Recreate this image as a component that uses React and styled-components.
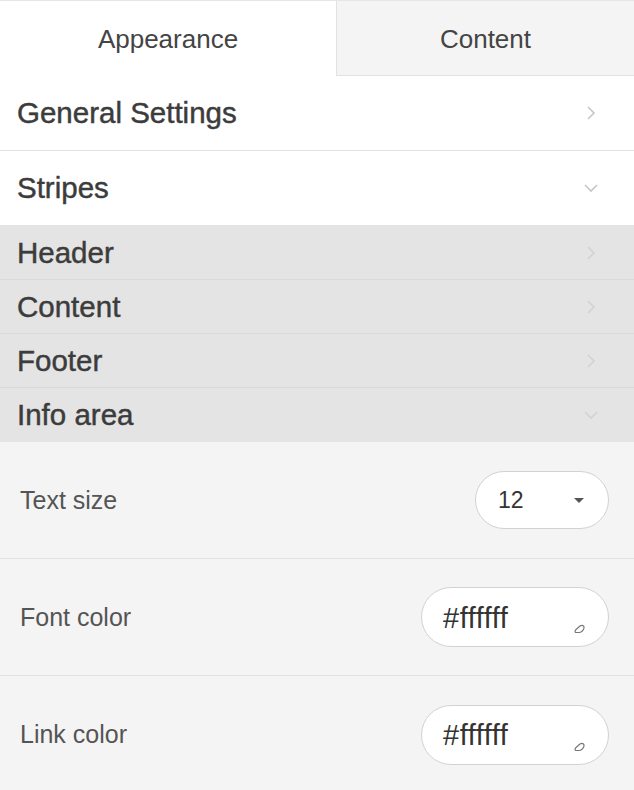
import React from "react";
import styled, { createGlobalStyle } from "styled-components";

const Global = createGlobalStyle`
  html, body { margin: 0; padding: 0; background: #f4f4f4; }
  body { font-family: "Liberation Sans", Arial, sans-serif; }
`;

const Panel = styled.div`
  width: 634px;
  min-height: 790px;
  background: #f4f4f4;
  border-top: 1px solid #e6e6e6;
  box-sizing: border-box;
`;

const Tabs = styled.div`
  display: grid;
  grid-template-columns: 336px 1fr;
  height: 75px;
  background: #fff;
`;

const Tab = styled.div`
  display: flex;
  align-items: center;
  justify-content: center;
  padding-top: 2px;
  font-size: 26px;
  color: #444;
  background: ${(p) => (p.active ? "#fff" : "#f4f4f4")};
  border-left: ${(p) => (p.active ? "none" : "1px solid #e2e2e2")};
  border-bottom: ${(p) => (p.active ? "none" : "1px solid #e2e2e2")};
`;

const Section = styled.div`
  display: flex;
  align-items: center;
  justify-content: space-between;
  height: ${(p) => (p.sub ? "54px" : "75px")};
  padding: 0 36px 0 17px;
  box-sizing: border-box;
  background: ${(p) => (p.sub ? "#e4e4e4" : "#fff")};
  border-bottom: 1px solid ${(p) => (p.sub ? "#dadada" : "#e2e2e2")};
  font-size: 29.5px;
  line-height: 1;
  color: #3c3c3c;
  -webkit-text-stroke: 0.45px #3c3c3c;
`;

const Sub = styled.div`
  ${Section}:last-child { border-bottom: none; }
`;

const FieldRow = styled.div`
  display: flex;
  align-items: center;
  justify-content: space-between;
  height: 117px;
  padding: 0 25px 0 20px;
  box-sizing: border-box;
  border-bottom: 1px solid #e2e2e2;
  font-size: 25px;
  color: #555;
  &:last-child { border-bottom: none; }
`;

const Select = styled.div`
  width: 134px;
  height: 58px;
  border: 1px solid #d2d2d2;
  border-radius: 29px;
  background: #fff;
  box-sizing: border-box;
  display: flex;
  align-items: center;
  justify-content: space-between;
  padding: 0 24px 0 22px;
  font-size: 23px;
  color: #333;
`;

const Caret = styled.span`
  width: 0;
  height: 0;
  border-left: 5px solid transparent;
  border-right: 5px solid transparent;
  border-top: 5px solid #555;
`;

const ColorInput = styled.div`
  position: relative;
  width: 188px;
  height: 60px;
  border: 1px solid #d2d2d2;
  border-radius: 30px;
  background: #fff;
  box-sizing: border-box;
  display: flex;
  align-items: center;
  padding: 2px 0 0 21px;
  font-size: 29px;
  letter-spacing: 0.5px;
  color: #333;
`;

const Grip = styled.svg`
  position: absolute;
  right: 22px;
  bottom: 12px;
`;

const Chevron = ({ down, faint }) => (
  <svg width="14" height="16" viewBox="0 0 14 16" fill="none">
    <path
      d={down ? "M1 5 L7 11 L13 5" : "M4 2 L10 8 L4 14"}
      stroke={faint ? "#d2d2d2" : "#c6c6c6"}
      strokeWidth="1.6"
    />
  </svg>
);

const subs = [
  { name: "Header" },
  { name: "Content" },
  { name: "Footer" },
  { name: "Info area", open: true },
];

const fields = [
  { label: "Font color", value: "#ffffff" },
  { label: "Link color", value: "#ffffff" },
];

export default function App() {
  return (
    <>
      <Global />
      <Panel>
        <Tabs>
          <Tab active>Appearance</Tab>
          <Tab>Content</Tab>
        </Tabs>
        <Section>
          General Settings
          <Chevron />
        </Section>
        <Section>
          Stripes
          <Chevron down />
        </Section>
        <Sub>
          {subs.map((s) => (
            <Section sub key={s.name}>
              {s.name}
              <Chevron down={s.open} faint />
            </Section>
          ))}
        </Sub>
        <div>
          <FieldRow>
            Text size
            <Select>
              12
              <Caret />
            </Select>
          </FieldRow>
          {fields.map((f) => (
            <FieldRow key={f.label}>
              {f.label}
              <ColorInput>
                {f.value}
                <Grip width="12" height="10" viewBox="0 0 12 10">
                  <path
                    d="M2 8.5 C0.8 8.5 0.8 6.5 2 5.5 L6 2 C8 0.8 10.5 1.5 10 4 C9.5 6.5 7 8.5 5 8.5 Z"
                    stroke="#777"
                    strokeWidth="1.2"
                    fill="none"
                  />
                </Grip>
              </ColorInput>
            </FieldRow>
          ))}
        </div>
      </Panel>
    </>
  );
}
